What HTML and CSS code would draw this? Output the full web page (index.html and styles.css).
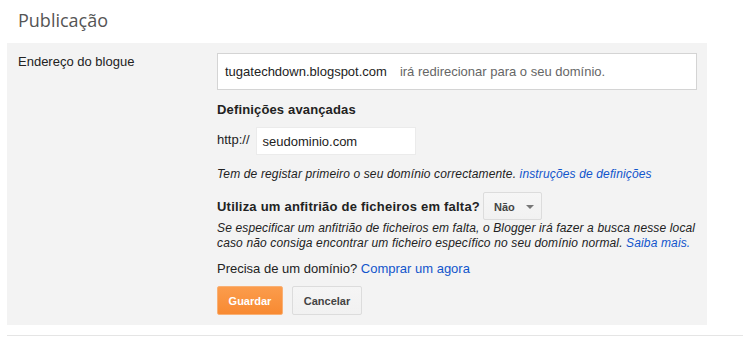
FILE: index.html
```html
<!DOCTYPE html>
<html lang="pt">
<head>
<meta charset="utf-8">
<title>Publicação</title>
<link rel="stylesheet" href="styles.css">
</head>
<body>
<h1 class="title">Publicação</h1>
<div class="panel">
  <div class="label">Endereço do blogue</div>
  <div class="content">
    <div class="address">
      <span class="blog-url">tugatechdown.blogspot.com</span>
      <span class="redirect">irá redirecionar para o seu domínio.</span>
    </div>
    <div class="section-title">Definições avançadas</div>
    <div class="http-row">
      <span class="http">http://</span>
      <div class="domain-input">seudominio.com</div>
    </div>
    <p class="note">Tem de registar primeiro o seu domínio correctamente. <a href="#" class="link">instruções de definições</a></p>
    <div class="host-row">
      <span class="host-label">Utiliza um anfitrião de ficheiros em falta?</span>
      <div class="select">Não <span class="arrow"></span></div>
    </div>
    <p class="note host-note">Se especificar um anfitrião de ficheiros em falta, o Blogger irá fazer a busca nesse local caso não consiga encontrar um ficheiro específico no seu domínio normal. <a href="#" class="link">Saiba mais.</a></p>
    <p class="buy">Precisa de um domínio? <a href="#" class="link">Comprar um agora</a></p>
    <div class="buttons">
      <button class="btn btn-primary">Guardar</button>
      <button class="btn">Cancelar</button>
    </div>
  </div>
</div>
<div class="rule"></div>
</body>
</html>
```
FILE: styles.css
```css
html, body {
  margin: 0;
  padding: 0;
  background: #fff;
}
body {
  font-family: Arial, "Liberation Sans", sans-serif;
  font-size: 13px;
  color: #222;
}
.title {
  margin: 0;
  height: 43px;
  box-sizing: border-box;
  padding: 8px 0 0 18px;
  font-family: "Open Sans", "Liberation Sans", sans-serif;
  font-weight: 400;
  font-size: 18px;
  line-height: 24px;
  color: #555;
}
.panel {
  display: flex;
  width: 700px;
  margin-left: 7px;
  background: #f3f3f3;
  padding: 10px 10px 10px 0;
  box-sizing: border-box;
}
.label {
  width: 210px;
  padding-left: 11px;
  box-sizing: border-box;
  line-height: 15px;
  padding-top: 1px;
}
.content {
  width: 480px;
  display: flex;
  flex-direction: column;
}
.address {
  height: 37px;
  background: #fff;
  border: 1px solid #d4d4d4;
  box-sizing: border-box;
  display: flex;
  align-items: center;
  padding-left: 7px;
  line-height: 15px;
}
.redirect {
  color: #666;
  margin-left: 13px;
}
.section-title {
  font-weight: bold;
  letter-spacing: 0.15px;
  line-height: 15px;
  margin-top: 12px;
  color: #222;
}
.http-row {
  display: flex;
  align-items: center;
  margin-top: 10px;
}
.http {
  line-height: 15px;
  margin-top: -4px;
}
.domain-input {
  width: 160px;
  height: 28px;
  box-sizing: border-box;
  margin-left: 6px;
  background: #fff;
  border: 1px solid #ebebeb;
  padding: 5px 6px 0;
  line-height: 17px;
}
.note {
  margin: 12px 0 0;
  font-size: 12px;
  font-style: italic;
  letter-spacing: 0.14px;
  line-height: 15px;
  color: #222;
}
.link {
  color: #15c;
  text-decoration: none;
}
.host-row {
  display: flex;
  align-items: center;
  margin-top: 10px;
}
.host-label {
  font-weight: bold;
  letter-spacing: 0.22px;
  line-height: 15px;
}
.select {
  margin-left: 3px;
  width: 59px;
  height: 28px;
  box-sizing: border-box;
  border: 1px solid #dcdcdc;
  border-radius: 2px;
  background: linear-gradient(#f6f6f6, #f1f1f1);
  font-size: 11px;
  font-weight: bold;
  color: #444;
  display: flex;
  align-items: center;
  padding-left: 10px;
  padding-top: 2px;
}
.arrow {
  margin-left: 11px;
  width: 0;
  height: 0;
  border-left: 4px solid transparent;
  border-right: 4px solid transparent;
  border-top: 4px solid #777;
}
.host-note {
  margin-top: 1px;
}
.buy {
  margin: 10px 0 0;
  line-height: 15px;
}
.buttons {
  display: flex;
  gap: 9px;
  margin-top: 10px;
}
.btn {
  height: 29px;
  padding: 0 10px;
  font-family: Arial, "Liberation Sans", sans-serif;
  font-size: 11px;
  font-weight: bold;
  color: #444;
  border: 1px solid #dcdcdc;
  border-radius: 2px;
  background: linear-gradient(#f5f5f5, #f1f1f1);
  min-width: 70px;
}
.btn-primary {
  min-width: 66px;
  color: #fff;
  border-color: #f9b074;
  background: linear-gradient(#fb9c4c, #f88a32);
}
.rule {
  margin: 10px 0 0 7px;
  border-top: 1px solid #e5e5e5;
}
```
